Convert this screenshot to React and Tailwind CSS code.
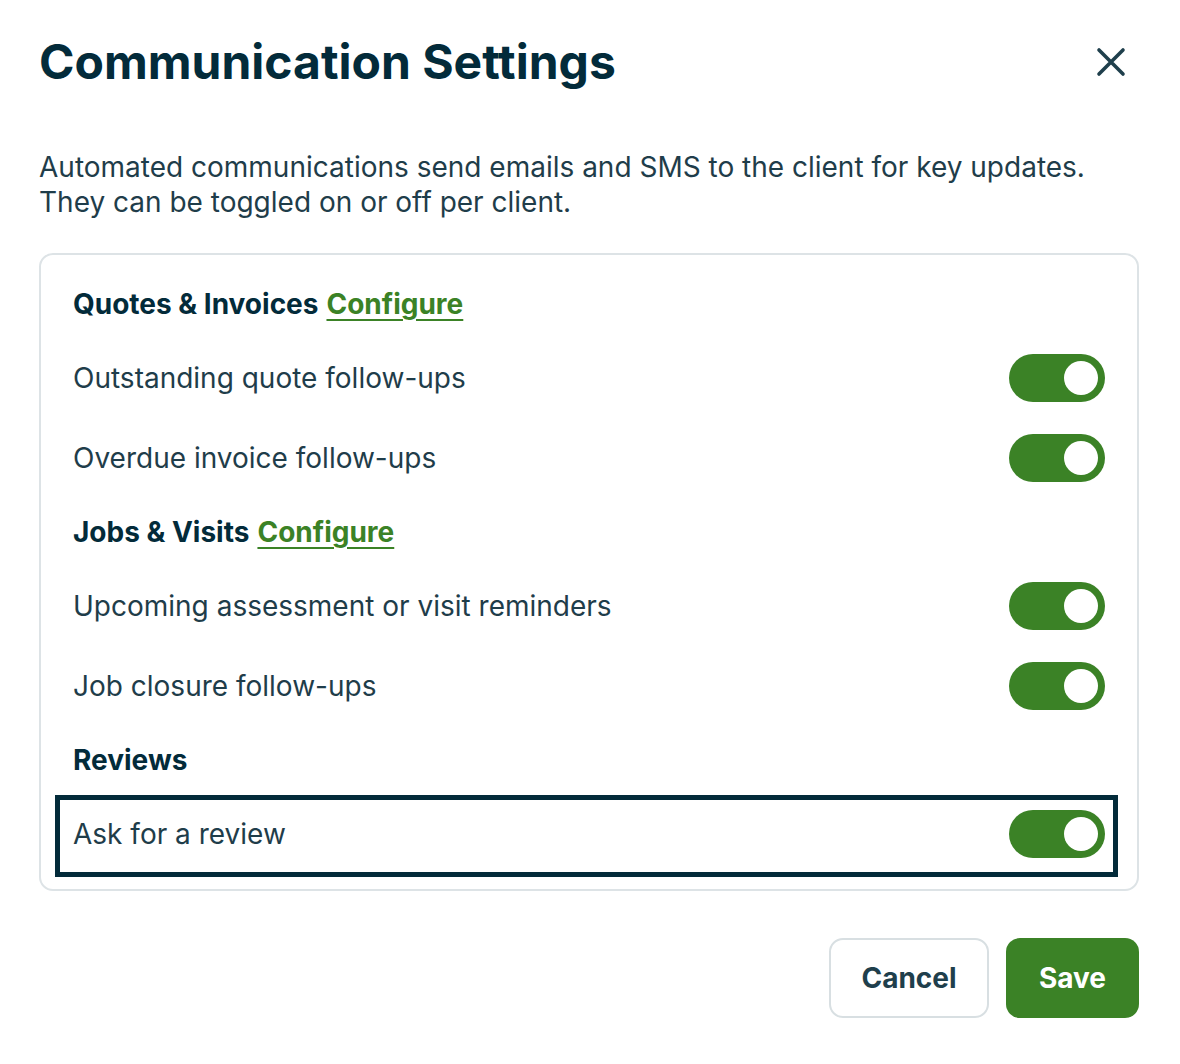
import React, { useState } from "react";

const sections = [
  {
    title: "Quotes & Invoices",
    configure: true,
    items: [
      { id: "quote", label: "Outstanding quote follow-ups" },
      { id: "invoice", label: "Overdue invoice follow-ups" },
    ],
  },
  {
    title: "Jobs & Visits",
    configure: true,
    items: [
      { id: "visit", label: "Upcoming assessment or visit reminders" },
      { id: "closure", label: "Job closure follow-ups" },
    ],
  },
  {
    title: "Reviews",
    configure: false,
    items: [{ id: "review", label: "Ask for a review", focused: true }],
  },
];

const Toggle = ({ on, onClick }) => (
  <button
    onClick={onClick}
    className={`relative block w-[96px] h-[48px] rounded-full shrink-0 ${on ? "bg-[#3b8226]" : "bg-[#c9d1d5]"}`}
  >
    <span
      className={`absolute top-[7px] w-[34px] h-[34px] rounded-full bg-white ${on ? "right-[7px]" : "left-[7px]"}`}
    />
  </button>
);

const App = () => {
  const [settings, setSettings] = useState({
    quote: true,
    invoice: true,
    visit: true,
    closure: true,
    review: true,
  });

  function handleToggle(id) {
    setSettings({ ...settings, [id]: !settings[id] });
  }

  return (
    <div className="w-[1180px] h-[1064px] bg-white pl-[39px] pr-[41px] pt-[32px] font-['Inter',sans-serif]">
      <div className="flex items-center justify-between h-[60px]">
        <h1 className="text-[48px] leading-[60px] font-bold text-[#032b3a]">
          Communication Settings
        </h1>
        <button className="w-[44px] h-[44px] flex items-center justify-center mr-[6px]">
          <svg width="30" height="30" viewBox="0 0 30 30">
            <path
              d="M3 3 L27 27 M27 3 L3 27"
              stroke="#1f3f4c"
              strokeWidth="3.6"
              strokeLinecap="round"
            />
          </svg>
        </button>
      </div>

      <p className="mt-[58px] text-[28px] leading-[35px] text-[#1f3d4a]">
        Automated communications send emails and SMS to the client for key updates.
        <br />
        They can be toggled on or off per client.
      </p>

      <div className="mt-[33px] border-2 border-[#dde3e6] rounded-[14px] px-[32px] py-[31px] flex flex-col gap-8">
        {sections.map((section) => (
          <React.Fragment key={section.title}>
            <div className="h-9 flex items-center text-[28px] font-bold text-[#032b3a]">
              {section.title}
              {section.configure && (
                <a
                  href="#"
                  className="ml-[8px] text-[#3b8226] underline decoration-2 underline-offset-[5px]"
                >
                  Configure
                </a>
              )}
            </div>
            {section.items.map((item) => (
              <div
                key={item.id}
                className="relative h-[48px] flex items-center justify-between"
              >
                {item.focused && (
                  <span className="absolute -left-[18px] -right-[13px] -top-[15px] -bottom-[19px] border-[5px] border-[#032b3a]" />
                )}
                <span className="relative text-[28px] text-[#1f3d4a]">
                  {item.label}
                </span>
                <span className="relative flex">
                  <Toggle
                    on={settings[item.id]}
                    onClick={() => handleToggle(item.id)}
                  />
                </span>
              </div>
            ))}
          </React.Fragment>
        ))}
      </div>

      <div className="mt-[47px] flex justify-end gap-[17px]">
        <button className="w-[160px] h-[80px] rounded-[14px] border-2 border-[#d8dfe2] text-[28px] font-bold text-[#1f3f4c]">
          Cancel
        </button>
        <button className="w-[133px] h-[80px] rounded-[14px] bg-[#3b8226] text-[28px] font-bold text-white">
          Save
        </button>
      </div>
    </div>
  );
};

export default App;
